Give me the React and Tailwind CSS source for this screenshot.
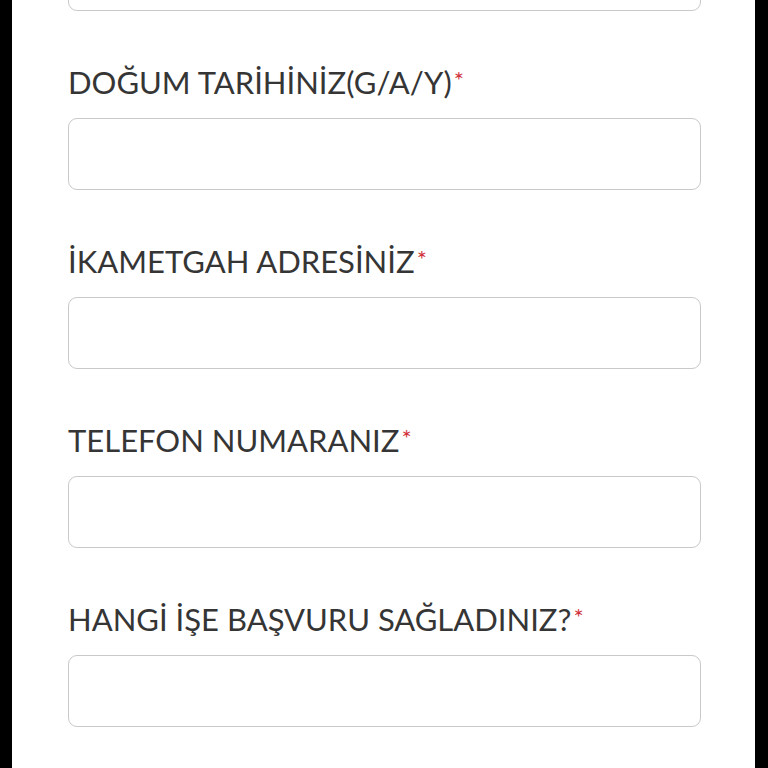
const fields = [
  'DOĞUM TARİHİNİZ(G/A/Y)',
  'İKAMETGAH ADRESİNİZ',
  'TELEFON NUMARANIZ',
  'HANGİ İŞE BAŞVURU SAĞLADINIZ?'
];

function Field({ label }) {
  return (
    <div className="mt-[53px]">
      <label className="block text-[31px] leading-[36px] text-[#353535] whitespace-nowrap">
        {label}
        <span className="ml-[2px] text-[#d0323a] text-[24px] align-top relative top-[-2px]">*</span>
      </label>
      <input
        type="text"
        className="mt-[18px] block w-full h-[72px] rounded-[9px] border-[1.5px] border-[#c9c9c9] bg-white outline-none"
      />
    </div>
  );
}

export default function App() {
  return (
    <div className="h-[768px] w-[768px] overflow-hidden bg-black flex" style={{ fontFamily: 'Lato, "Noto Sans", sans-serif' }}>
      <div className="ml-[12px] w-[743px] h-full bg-white pl-[56px] pr-[54px] overflow-hidden">
        <div className="-mt-[61px] h-[72px] rounded-[9px] border-[1.5px] border-[#c9c9c9]" />
        {fields.map(f => (
          <Field key={f} label={f} />
        ))}
      </div>
    </div>
  );
}
